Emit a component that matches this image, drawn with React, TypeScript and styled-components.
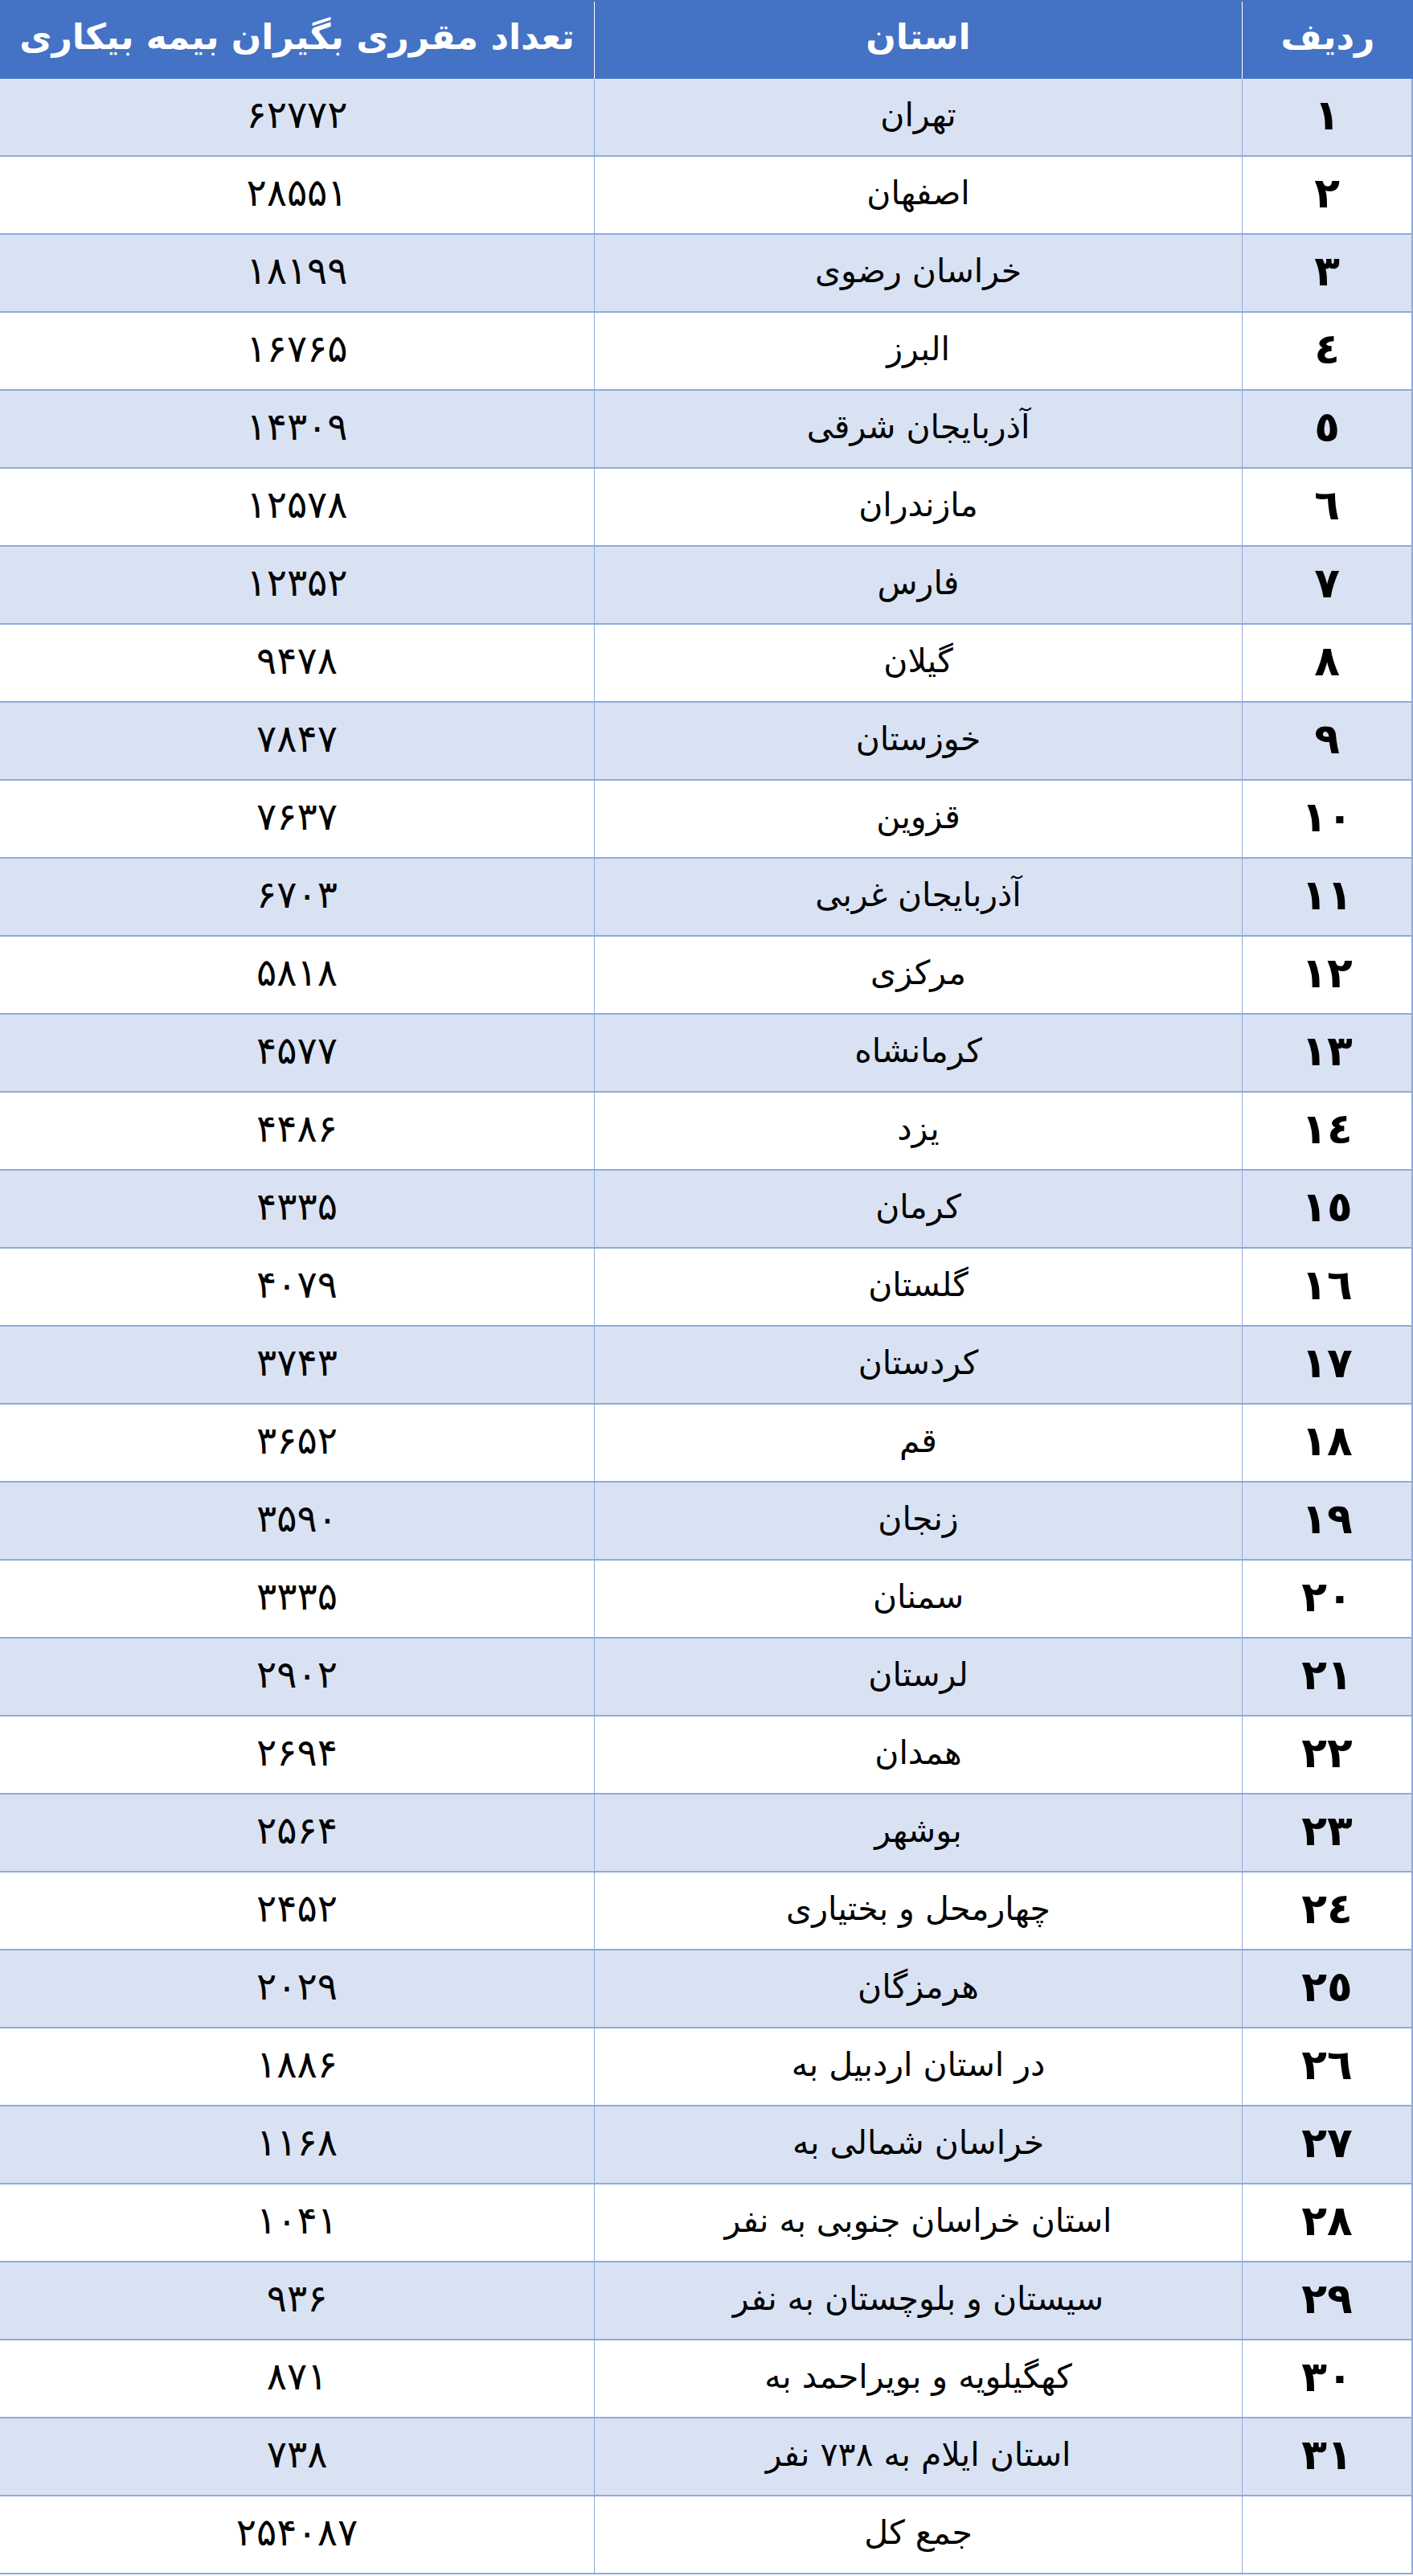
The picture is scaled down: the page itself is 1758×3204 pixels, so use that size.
import React from 'react'
import styled, { createGlobalStyle } from 'styled-components'

const GlobalStyle = createGlobalStyle`
  html,
  body {
    margin: 0;
    padding: 0;
    background: #ffffff;
  }
`

const Page = styled.div`
  width: 1758px;
  min-height: 3204px;
  background: #ffffff;
`

const Table = styled.div`
  width: 1758px;
  direction: rtl;
  font-family: 'DejaVu Sans', 'Noto Sans', sans-serif;
  color: #000000;
`

const Columns = `
  display: grid;
  grid-template-columns: 213px 806px 739px;
  box-sizing: border-box;
`

const HeaderRow = styled.div`
  ${Columns}
  height: 98px;
  background: #4472c4;
`

const HeaderCell = styled.div<{ $last?: boolean }>`
  display: flex;
  align-items: center;
  justify-content: center;
  padding-bottom: 10px;
  box-sizing: border-box;
  color: #ffffff;
  font-weight: 700;
  font-size: 44px;
  white-space: nowrap;
  border-left: ${(p) => (p.$last ? 'none' : '1px solid #ffffff')};
  margin-top: 2px;
`

const Row = styled.div<{ $shade: boolean }>`
  ${Columns}
  height: 97px;
  border-bottom: 2px solid #8eaadb;
  background: ${(p) => (p.$shade ? '#d9e2f3' : '#ffffff')};
`

const Cell = styled.div`
  display: flex;
  align-items: center;
  justify-content: center;
  padding-bottom: 6px;
  box-sizing: border-box;
  white-space: nowrap;
  border-left: 1px solid #8eaadb;
`

const RankCell = styled(Cell)`
  font-weight: 700;
  font-size: 52px;
  border-right: 2px solid #8eaadb;
`

const NameCell = styled(Cell)`
  font-size: 41px;
`

const CountCell = styled(Cell)`
  font-size: 47px;
  border-left: none;
`

const arabicDigits = '٠١٢٣٤٥٦٧٨٩'
const persianDigits = '۰۱۲۳۴۵۶۷۸۹'

const toDigits = (n: number, set: string) =>
  String(n)
    .split('')
    .map((d) => set[Number(d)])
    .join('')

const rows: [string, number][] = [
  ['تهران', 62772],
  ['اصفهان', 28551],
  ['خراسان رضوی', 18199],
  ['البرز', 16765],
  ['آذربایجان شرقی', 14309],
  ['مازندران', 12578],
  ['فارس', 12352],
  ['گیلان', 9478],
  ['خوزستان', 7847],
  ['قزوین', 7637],
  ['آذربایجان غربی', 6703],
  ['مرکزی', 5818],
  ['کرمانشاه', 4577],
  ['یزد', 4486],
  ['کرمان', 4335],
  ['گلستان', 4079],
  ['کردستان', 3743],
  ['قم', 3652],
  ['زنجان', 3590],
  ['سمنان', 3335],
  ['لرستان', 2902],
  ['همدان', 2694],
  ['بوشهر', 2564],
  ['چهارمحل و بختیاری', 2452],
  ['هرمزگان', 2029],
  ['در استان اردبیل به', 1886],
  ['خراسان شمالی به', 1168],
  ['استان خراسان جنوبی به نفر', 1041],
  ['سیستان و بلوچستان به نفر', 936],
  ['کهگیلویه و بویراحمد به', 871],
  ['استان ایلام به ۷۳۸ نفر', 738],
]

export default function App() {
  return (
    <Page>
      <GlobalStyle />
      <Table>
        <HeaderRow>
          <HeaderCell>ردیف</HeaderCell>
          <HeaderCell>استان</HeaderCell>
          <HeaderCell $last>تعداد مقرری بگیران بیمه بیکاری</HeaderCell>
        </HeaderRow>
        {rows.map(([name, count], i) => (
          <Row key={name} $shade={i % 2 === 0}>
            <RankCell>{toDigits(i + 1, arabicDigits)}</RankCell>
            <NameCell>{name}</NameCell>
            <CountCell>{toDigits(count, persianDigits)}</CountCell>
          </Row>
        ))}
        <Row $shade={false}>
          <RankCell />
          <NameCell>جمع کل</NameCell>
          <CountCell>{toDigits(254087, persianDigits)}</CountCell>
        </Row>
      </Table>
    </Page>
  )
}
